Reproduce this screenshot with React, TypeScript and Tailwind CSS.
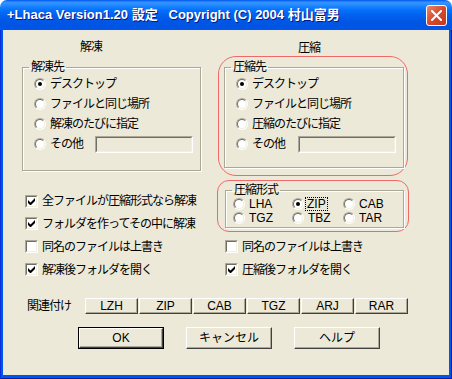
import type { ReactNode } from 'react';

const FONT = "font-['Liberation_Sans','Noto_Sans_CJK_JP',sans-serif]";

function Radio({ checked = false }: { checked?: boolean }) {
  return (
    <span className="w-[12px] h-[12px] shrink-0 rounded-full border border-t-[#ACA899] border-l-[#ACA899] border-b-white border-r-white">
      <span className="flex w-full h-full items-center justify-center rounded-full bg-white border border-t-[#716F64] border-l-[#716F64] border-b-[#F1EFE2] border-r-[#F1EFE2]">
        {checked && <span className="w-[4px] h-[4px] rounded-full bg-black" />}
      </span>
    </span>
  );
}

function Check({ checked = false }: { checked?: boolean }) {
  return (
    <span className="w-[13px] h-[13px] shrink-0 border border-t-[#ACA899] border-l-[#ACA899] border-b-white border-r-white">
      <span className="flex w-full h-full items-center justify-center bg-white border border-t-[#716F64] border-l-[#716F64] border-b-[#F1EFE2] border-r-[#F1EFE2]">
        {checked && (
          <svg width="7" height="7" viewBox="0 0 7 7">
            <path d="M0 2v3l2 2h1l4-4V0L2.5 4.5z" fill="#000" />
          </svg>
        )}
      </span>
    </span>
  );
}

function Group({ title, className = '', children }: { title: string; className?: string; children: ReactNode }) {
  return (
    <fieldset
      className={`border border-[#ACA899] shadow-[inset_1px_1px_0_white,1px_1px_0_white] pl-[6px] ${className}`}
    >
      <legend className="px-[2px] leading-[14px]">{title}</legend>
      {children}
    </fieldset>
  );
}

function RadioRow({ label, checked, field }: { label: string; checked?: boolean; field?: boolean }) {
  return (
    <div className="h-[20px] flex items-center ml-[5px]">
      <Radio checked={checked} />
      <span className="ml-[4px] whitespace-nowrap">{label}</span>
      {field && (
        <span className="ml-auto mr-[7px] w-[98px] h-[17px] border border-t-[#ACA899] border-l-[#ACA899] border-b-white border-r-white">
          <span className="block w-full h-full border border-t-[#716F64] border-l-[#716F64] border-b-[#F1EFE2] border-r-[#F1EFE2]" />
        </span>
      )}
    </div>
  );
}

function CheckRow({ label, checked, className = '' }: { label: string; checked?: boolean; className?: string }) {
  return (
    <div className={`flex items-center ${className}`}>
      <Check checked={checked} />
      <span className="ml-[4px] whitespace-nowrap">{label}</span>
    </div>
  );
}

function Btn({ children, className = '' }: { children: ReactNode; className?: string }) {
  return (
    <button className={`flex items-center justify-center bg-[#ECE9D8] border border-t-white border-l-white border-r-[#404040] border-b-[#404040] shadow-[inset_-1px_-1px_0_#ACA899] tracking-normal ${className}`}>
      {children}
    </button>
  );
}

const ASSOC = ['LZH', 'ZIP', 'CAB', 'TGZ', 'ARJ', 'RAR'];

const FORMATS: [string, boolean][] = [
  ['LHA', false],
  ['ZIP', true],
  ['CAB', false],
  ['TGZ', false],
  ['TBZ', false],
  ['TAR', false],
];

export default function App() {
  return (
    <div className={`w-[452px] h-[379px] flex flex-col rounded-t-[7px] overflow-hidden text-[12px] text-black ${FONT}`}>
      <div className="h-[30px] shrink-0 flex items-center justify-between pl-[7px] pr-[5px] bg-[linear-gradient(to_bottom,#0058EE_0%,#3593FF_8%,#288EFF_15%,#127DFF_25%,#036FFC_35%,#0262EE_50%,#0057E5_70%,#0054E3_90%,#0055EB_100%)]">
        <span className="text-white font-bold text-[13px] whitespace-pre [text-shadow:1px_1px_#0A1883]">
          {'+Lhaca Version1.20 設定   Copyright (C) 2004 村山富男'}
        </span>
        <span className="w-[21px] h-[21px] flex items-center justify-center rounded-[3px] border border-white bg-[linear-gradient(135deg,#E8876A,#D9492A_50%,#C4381B)]">
          <svg width="11" height="11" viewBox="0 0 11 11">
            <path d="M1 1L10 10M10 1L1 10" stroke="#fff" strokeWidth="2" strokeLinecap="square" />
          </svg>
        </span>
      </div>

      <div className="flex-1 flex px-[3px] pb-[4px] bg-[#0055EA] shadow-[inset_1px_0_0_#0831D9,inset_-1px_0_0_#001EA0,inset_0_-1px_0_#001EA0]">
        <div className="flex-1 flex flex-col bg-[#ECE9D8] tracking-[-1px]">
          <div className="flex">
            {/* 解凍 */}
            <div className="ml-[19px] w-[179px] flex flex-col">
              <div className="mt-[9px] h-[16px] leading-[16px] pl-[58px]">解凍</div>
              <Group title="解凍先" className="mt-[5px] pb-[16px]">
                <RadioRow label="デスクトップ" checked />
                <RadioRow label="ファイルと同じ場所" />
                <RadioRow label="解凍のたびに指定" />
                <RadioRow label="その他" field />
              </Group>
              <div className="mt-[19px] ml-[3px] flex flex-col">
                <CheckRow label="全ファイルが圧縮形式なら解凍" checked className="h-[22px]" />
                <CheckRow label="フォルダを作ってその中に解凍" checked className="h-[23px]" />
                <CheckRow label="同名のファイルは上書き" className="h-[23px]" />
                <CheckRow label="解凍後フォルダを開く" checked className="h-[23px]" />
              </div>
            </div>

            {/* 圧縮 */}
            <div className="ml-[16px] w-[192px] flex flex-col">
              <div className="mt-[10px] h-[16px] leading-[16px] pl-[81px]">圧縮</div>
              <div className="ml-[1px] w-[190px] border border-[#F06868] rounded-[18px] pt-[3px] pl-[5px] pb-[7px]">
                <Group title="圧縮先" className="w-[180px] pb-[13px]">
                  <RadioRow label="デスクトップ" checked />
                  <RadioRow label="ファイルと同じ場所" />
                  <RadioRow label="圧縮のたびに指定" />
                  <RadioRow label="その他" field />
                </Group>
              </div>
              <div className="mt-[4px] w-[192px] border border-[#F06868] rounded-[12px] pt-[2px] pl-[7px] pb-[3px]">
                <Group title="圧縮形式" className="w-[179px] pb-[2px]">
                  <div className="ml-[1px] grid grid-cols-[59px_51px_auto] tracking-normal">
                    {FORMATS.map(([name, on]) => (
                      <div key={name} className="h-[14px] flex items-center">
                        <Radio checked={on} />
                        <span
                          className={
                            on
                              ? 'ml-[2px] px-[1px] leading-[12px] outline-1 outline-dotted outline-black'
                              : 'ml-[4px]'
                          }
                        >
                          {name}
                        </span>
                      </div>
                    ))}
                  </div>
                </Group>
              </div>
              <div className="mt-[3px] ml-[8px] flex flex-col">
                <CheckRow label="同名のファイルは上書き" className="h-[23px]" />
                <CheckRow label="圧縮後フォルダを開く" checked className="h-[23px]" />
              </div>
            </div>
          </div>

          <div className="mt-[17px] h-[16px] flex items-center pl-[24px]">
            <span className="w-[58px]">関連付け</span>
            <div className="flex gap-[1px]">
              {ASSOC.map((a) => (
                <Btn key={a} className="w-[53px] h-[16px]">
                  {a}
                </Btn>
              ))}
            </div>
          </div>

          <div className="mt-[13px] h-[22px] flex pl-[75px] gap-[22px]">
            <div className="w-[86px] h-[22px] border border-black flex">
              <Btn className="flex-1">OK</Btn>
            </div>
            <Btn className="w-[86px] h-[22px]">キャンセル</Btn>
            <Btn className="w-[86px] h-[22px]">ヘルプ</Btn>
          </div>
        </div>
      </div>
    </div>
  );
}
